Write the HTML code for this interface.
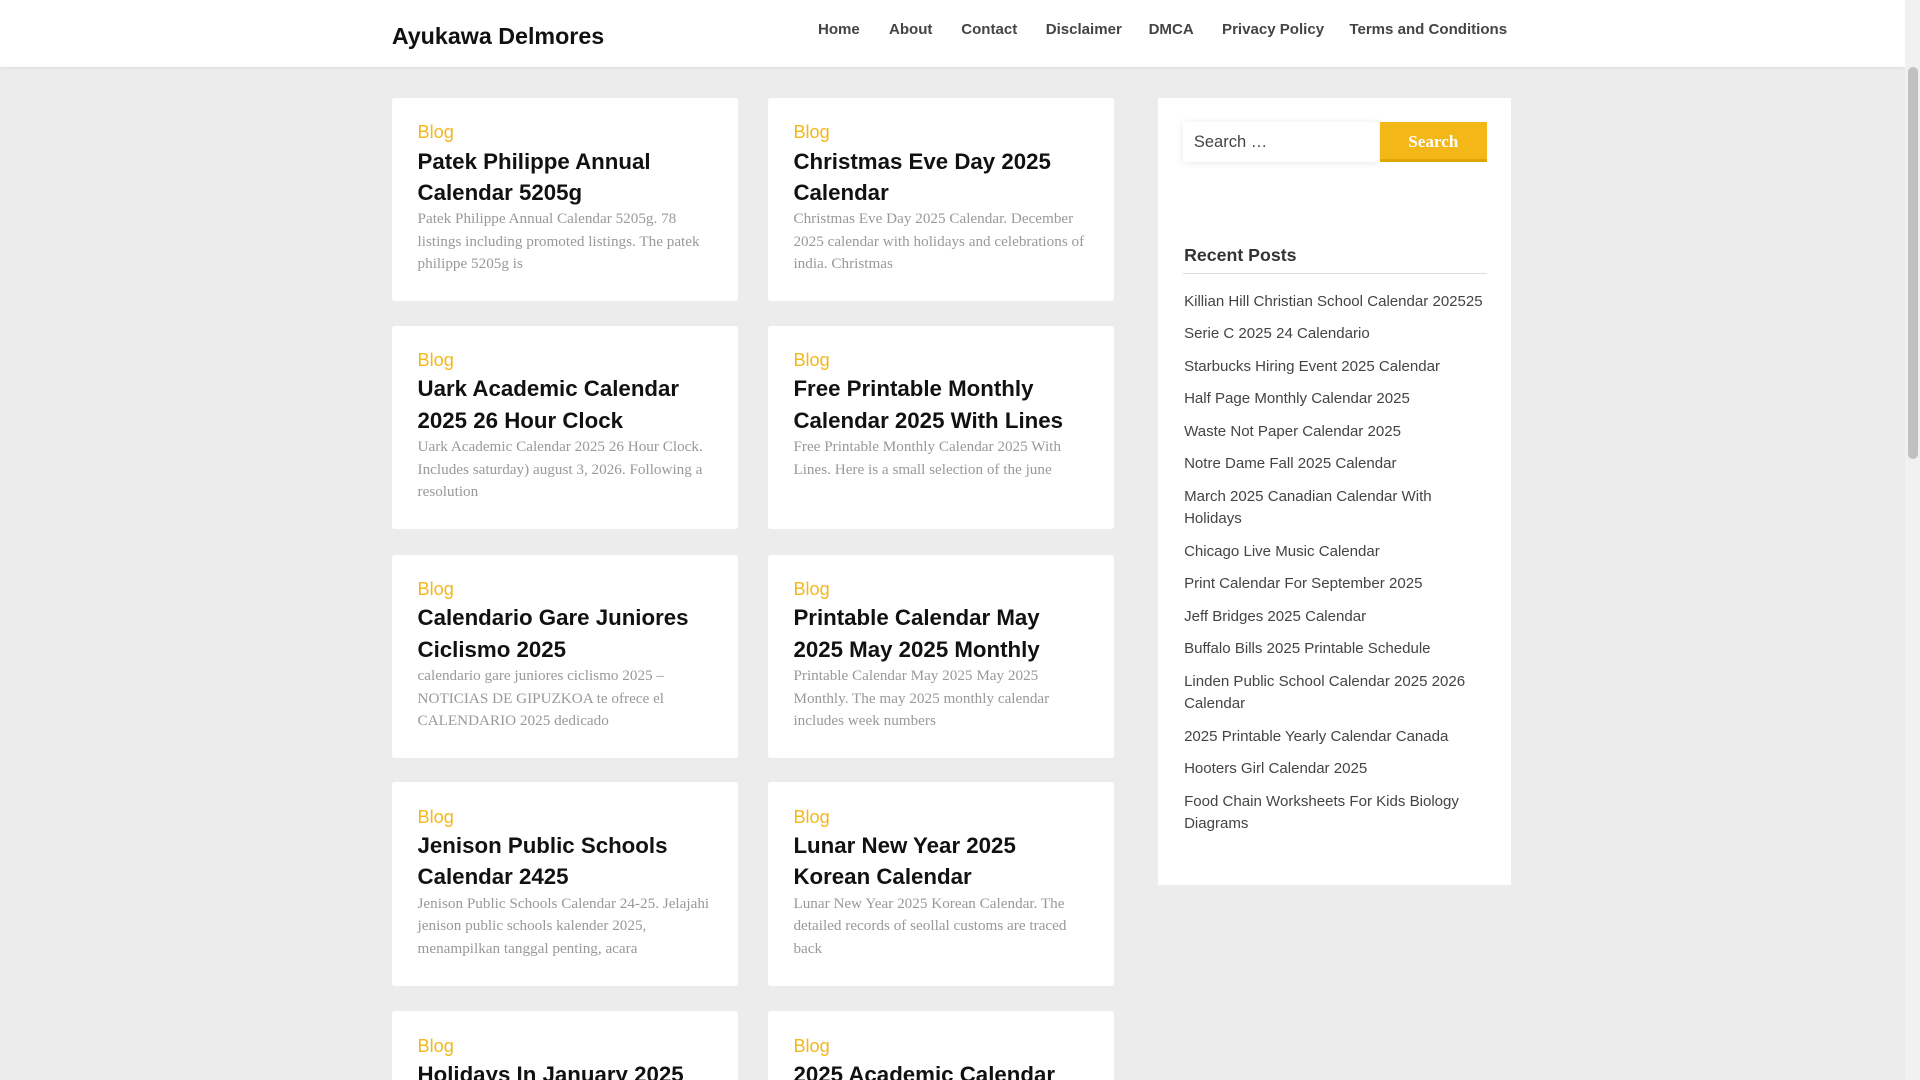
<!DOCTYPE html>
<html><head><meta charset="utf-8"><style>
html,body{margin:0;padding:0;overflow:hidden;width:1920px;height:1080px}
.wrap{zoom:1.22449;width:1568px;height:882px;overflow:hidden;background:#ececec;font-family:"Liberation Sans",sans-serif;position:relative}
.hdr{position:absolute;left:0;top:0;width:1556px;height:55px;background:#fff;box-shadow:0 1px 3px rgba(0,0,0,.08)}
.logo{position:absolute;left:320px;top:19px;font-size:19px;font-weight:bold;color:#111}
.nav{position:absolute;top:17px;font-size:12.3px;font-weight:bold;color:#444}
.sb{position:absolute;right:0;top:0;width:12px;height:882px;background:#f1f1f1}
.sb div{position:absolute;left:2px;top:55px;width:8px;height:320px;background:#c1c1c1;border-radius:4px}
.card{position:absolute;width:283px;height:166px;background:#fff;border-radius:2px}
.card .c{position:absolute;left:21px;top:20px;color:#f4b718;font-size:14.8px}
.card h2{position:absolute;left:21px;top:39px;margin:0;width:238px;font-size:18.2px;line-height:25.5px;color:#111}
.card p{position:absolute;left:21px;top:90px;margin:0;width:245px;font-family:"Liberation Serif",serif;font-size:12.4px;line-height:18.5px;color:#999}
.side{position:absolute;left:946px;top:80px;width:288px;height:643px;background:#fff}
.inp{position:absolute;left:20px;top:20px;width:160px;height:32px;background:#fff;box-shadow:0 1px 6px rgba(0,0,0,.1);font-size:13.5px;color:#444;line-height:32px;padding-left:9px;box-sizing:border-box}
.btn{position:absolute;left:181px;top:20px;width:87px;height:30px;background:#f4b718;border-bottom:3px solid #e0a500;color:#fff;font-family:"Liberation Serif",serif;font-weight:bold;font-size:14px;text-align:center;line-height:32px}
.rp{position:absolute;left:21px;top:120px;font-size:14.5px;font-weight:bold;color:#333}
.line{position:absolute;left:20px;top:143px;width:248px;height:1px;background:#ddd}
.li{position:absolute;left:21px;width:250px;font-size:12.3px;line-height:18px;color:#444}
</style></head><body><div class="wrap">
<div class="hdr"><div class="logo">Ayukawa Delmores</div>
<span class="nav" style="left:668px">Home</span><span class="nav" style="left:726px">About</span><span class="nav" style="left:785px">Contact</span><span class="nav" style="left:854px">Disclaimer</span><span class="nav" style="left:938px">DMCA</span><span class="nav" style="left:998px">Privacy Policy</span><span class="nav" style="left:1102px">Terms and Conditions</span></div>
<div class="sb"><div></div></div>

<div class="card" style="left:320px;top:80px"><span class="c">Blog</span><h2>Patek Philippe Annual Calendar 5205g</h2><p>Patek Philippe Annual Calendar 5205g. 78 listings including promoted listings. The patek philippe 5205g is</p></div>
<div class="card" style="left:627px;top:80px"><span class="c">Blog</span><h2>Christmas Eve Day 2025 Calendar</h2><p>Christmas Eve Day 2025 Calendar. December 2025 calendar with holidays and celebrations of india. Christmas</p></div>
<div class="card" style="left:320px;top:266px"><span class="c">Blog</span><h2>Uark Academic Calendar 2025 26 Hour Clock</h2><p>Uark Academic Calendar 2025 26 Hour Clock. Includes saturday) august 3, 2026. Following a resolution</p></div>
<div class="card" style="left:627px;top:266px"><span class="c">Blog</span><h2>Free Printable Monthly Calendar 2025 With Lines</h2><p>Free Printable Monthly Calendar 2025 With Lines. Here is a small selection of the june</p></div>
<div class="card" style="left:320px;top:453px"><span class="c">Blog</span><h2>Calendario Gare Juniores Ciclismo 2025</h2><p>calendario gare juniores ciclismo 2025 – NOTICIAS DE GIPUZKOA te ofrece el CALENDARIO 2025 dedicado</p></div>
<div class="card" style="left:627px;top:453px"><span class="c">Blog</span><h2>Printable Calendar May 2025 May 2025 Monthly</h2><p>Printable Calendar May 2025 May 2025 Monthly. The may 2025 monthly calendar includes week numbers</p></div>
<div class="card" style="left:320px;top:639px"><span class="c">Blog</span><h2>Jenison Public Schools Calendar 2425</h2><p>Jenison Public Schools Calendar 24-25. Jelajahi jenison public schools kalender 2025, menampilkan tanggal penting, acara</p></div>
<div class="card" style="left:627px;top:639px"><span class="c">Blog</span><h2>Lunar New Year 2025 Korean Calendar</h2><p>Lunar New Year 2025 Korean Calendar. The detailed records of seollal customs are traced back</p></div>
<div class="card" style="left:320px;top:826px"><span class="c">Blog</span><h2>Holidays In January 2025</h2></div>
<div class="card" style="left:627px;top:826px"><span class="c">Blog</span><h2>2025 Academic Calendar</h2></div>

<div class="side">
<div class="inp">Search …</div><div class="btn">Search</div>
<div class="rp">Recent Posts</div><div class="line"></div>
<div class="li" style="top:158px;width:260px">Killian Hill Christian School Calendar 202525</div>
<div class="li" style="top:184px">Serie C 2025 24 Calendario</div>
<div class="li" style="top:211px">Starbucks Hiring Event 2025 Calendar</div>
<div class="li" style="top:237px">Half Page Monthly Calendar 2025</div>
<div class="li" style="top:264px">Waste Not Paper Calendar 2025</div>
<div class="li" style="top:290px">Notre Dame Fall 2025 Calendar</div>
<div class="li" style="top:317px">March 2025 Canadian Calendar With Holidays</div>
<div class="li" style="top:362px">Chicago Live Music Calendar</div>
<div class="li" style="top:388px">Print Calendar For September 2025</div>
<div class="li" style="top:415px">Jeff Bridges 2025 Calendar</div>
<div class="li" style="top:441px">Buffalo Bills 2025 Printable Schedule</div>
<div class="li" style="top:468px">Linden Public School Calendar 2025 2026 Calendar</div>
<div class="li" style="top:513px">2025 Printable Yearly Calendar Canada</div>
<div class="li" style="top:539px">Hooters Girl Calendar 2025</div>
<div class="li" style="top:566px">Food Chain Worksheets For Kids Biology Diagrams</div>
</div>
</div></body></html>
